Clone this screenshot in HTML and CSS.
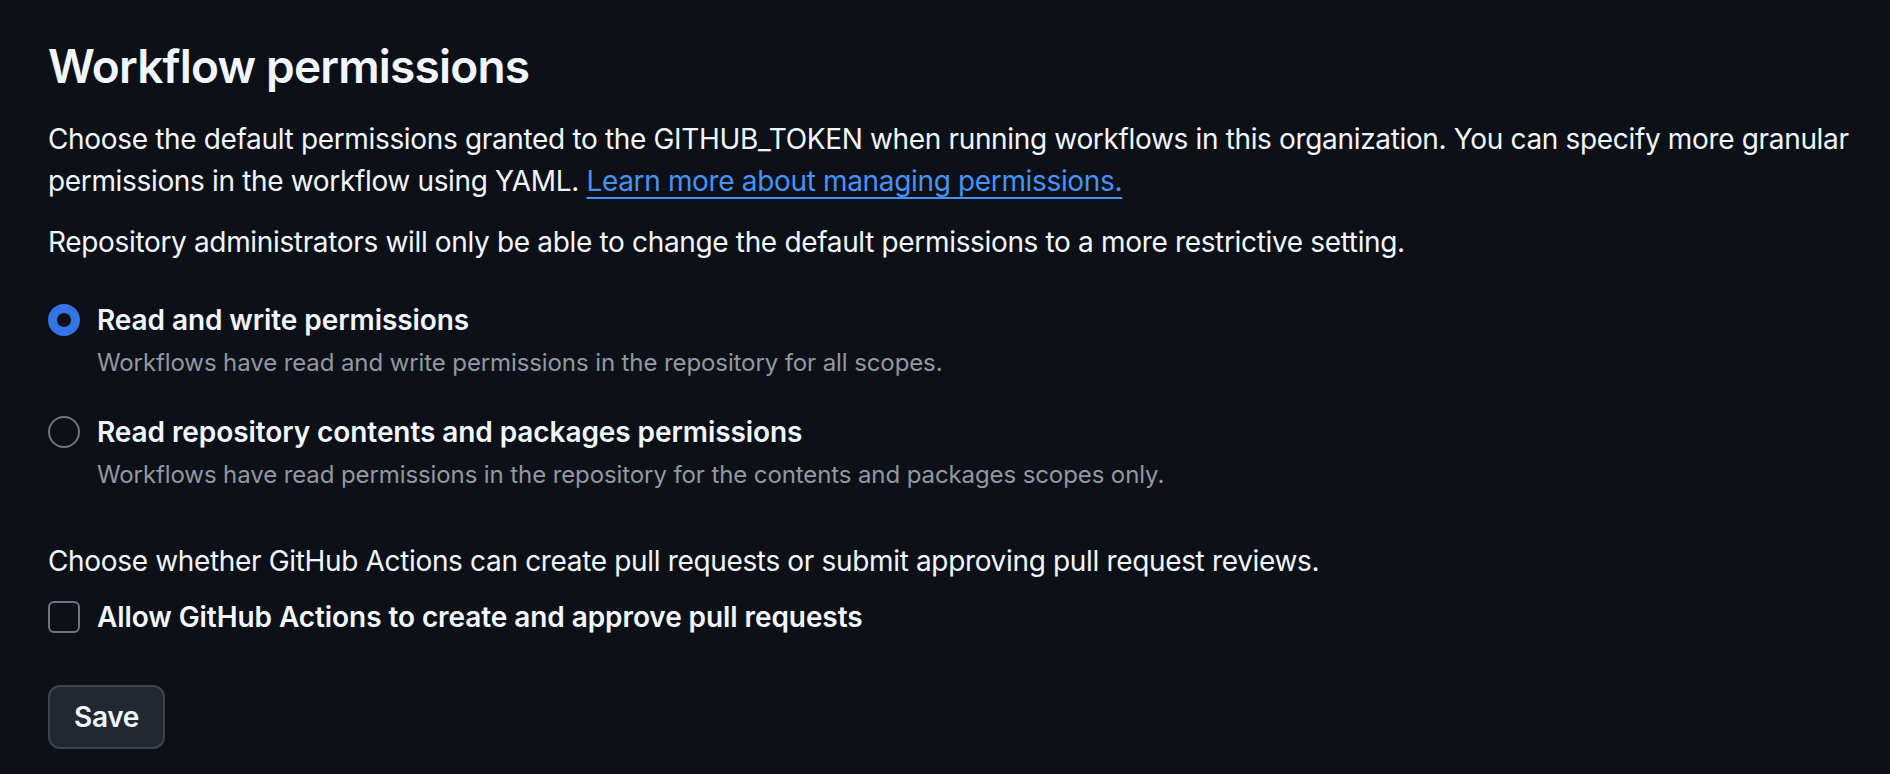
FILE: index.html
```html
<!DOCTYPE html>
<html lang="en">
<head>
<meta charset="utf-8">
<title>Workflow permissions</title>
<link rel="stylesheet" href="styles.css">
</head>
<body>
<main class="page">
  <h2 class="title">Workflow permissions</h2>
  <p class="text first">Choose the default permissions granted to the GITHUB_TOKEN when running workflows in this organization. You can specify more granular permissions in the workflow using YAML. <a class="link" href="#">Learn more about managing permissions.</a></p>
  <p class="text">Repository administrators will only be able to change the default permissions to a more restrictive setting.</p>

  <div class="options">
    <label class="option">
      <span class="radio checked"></span>
      <span class="option-body">
        <span class="option-label">Read and write permissions</span>
        <span class="option-note">Workflows have read and write permissions in the repository for all scopes.</span>
      </span>
    </label>
    <label class="option">
      <span class="radio"></span>
      <span class="option-body">
        <span class="option-label">Read repository contents and packages permissions</span>
        <span class="option-note">Workflows have read permissions in the repository for the contents and packages scopes only.</span>
      </span>
    </label>
  </div>

  <p class="text pr-text">Choose whether GitHub Actions can create pull requests or submit approving pull request reviews.</p>
  <label class="check-row">
    <span class="checkbox"></span>
    <span class="option-label">Allow GitHub Actions to create and approve pull requests</span>
  </label>

  <button class="btn" type="button">Save</button>
</main>
</body>
</html>
```

FILE: styles.css
```css
html, body {
  margin: 0;
  padding: 0;
  background: #0d1117;
}

body {
  font-family: Inter, "Noto Sans", "Liberation Sans", sans-serif;
  color: #f0f6fc;
  height: 774px;
  overflow: hidden;
}

.page {
  padding: 30px 20px 0 48px;
  display: flex;
  flex-direction: column;
  align-items: flex-start;
}

.title {
  margin: 0;
  font-size: 46px;
  line-height: 72px;
  font-weight: 600;
  letter-spacing: -0.8px;
  color: #f0f6fc;
}

.text {
  margin: 0 0 19px 0;
  font-size: 28px;
  line-height: 42px;
  font-weight: 400;
  letter-spacing: -0.34px;
}

.text.first {
  margin-top: 16px;
}

.link {
  color: #4493f8;
  text-decoration: underline;
  text-underline-offset: 6px;
  text-decoration-thickness: 2px;
}

.options {
  display: flex;
  flex-direction: column;
  gap: 31px;
  margin-top: 18px;
}

.option {
  display: flex;
  align-items: flex-start;
  gap: 17px;
}

.radio {
  box-sizing: border-box;
  width: 32px;
  height: 32px;
  border-radius: 50%;
  border: 2px solid #6e7681;
  margin-top: 4px;
  flex: none;
}

.radio.checked {
  border: 9px solid #3574e6;
}

.option-body {
  display: flex;
  flex-direction: column;
}

.option-label {
  font-size: 28px;
  line-height: 40px;
  font-weight: 600;
  letter-spacing: -0.08px;
  color: #f0f6fc;
}

.option-note {
  margin-top: 5px;
  font-size: 24px;
  line-height: 36px;
  color: #9198a1;
  letter-spacing: -0.1px;
}

.pr-text {
  margin-top: 47px;
  margin-bottom: 15px;
}

.check-row {
  display: flex;
  align-items: flex-start;
  gap: 17px;
}

.checkbox {
  box-sizing: border-box;
  width: 32px;
  height: 32px;
  border: 2px solid #6e7681;
  border-radius: 6px;
  margin-top: 4px;
  flex: none;
}

.btn {
  margin-top: 48px;
  box-sizing: border-box;
  height: 64px;
  padding: 0 24px;
  background: #212830;
  border: 2px solid #3d444d;
  border-radius: 12px;
  color: #f0f6fc;
  font-family: Inter, "Noto Sans", "Liberation Sans", sans-serif;
  font-size: 28px;
  font-weight: 600;
  letter-spacing: -0.3px;
}
```
